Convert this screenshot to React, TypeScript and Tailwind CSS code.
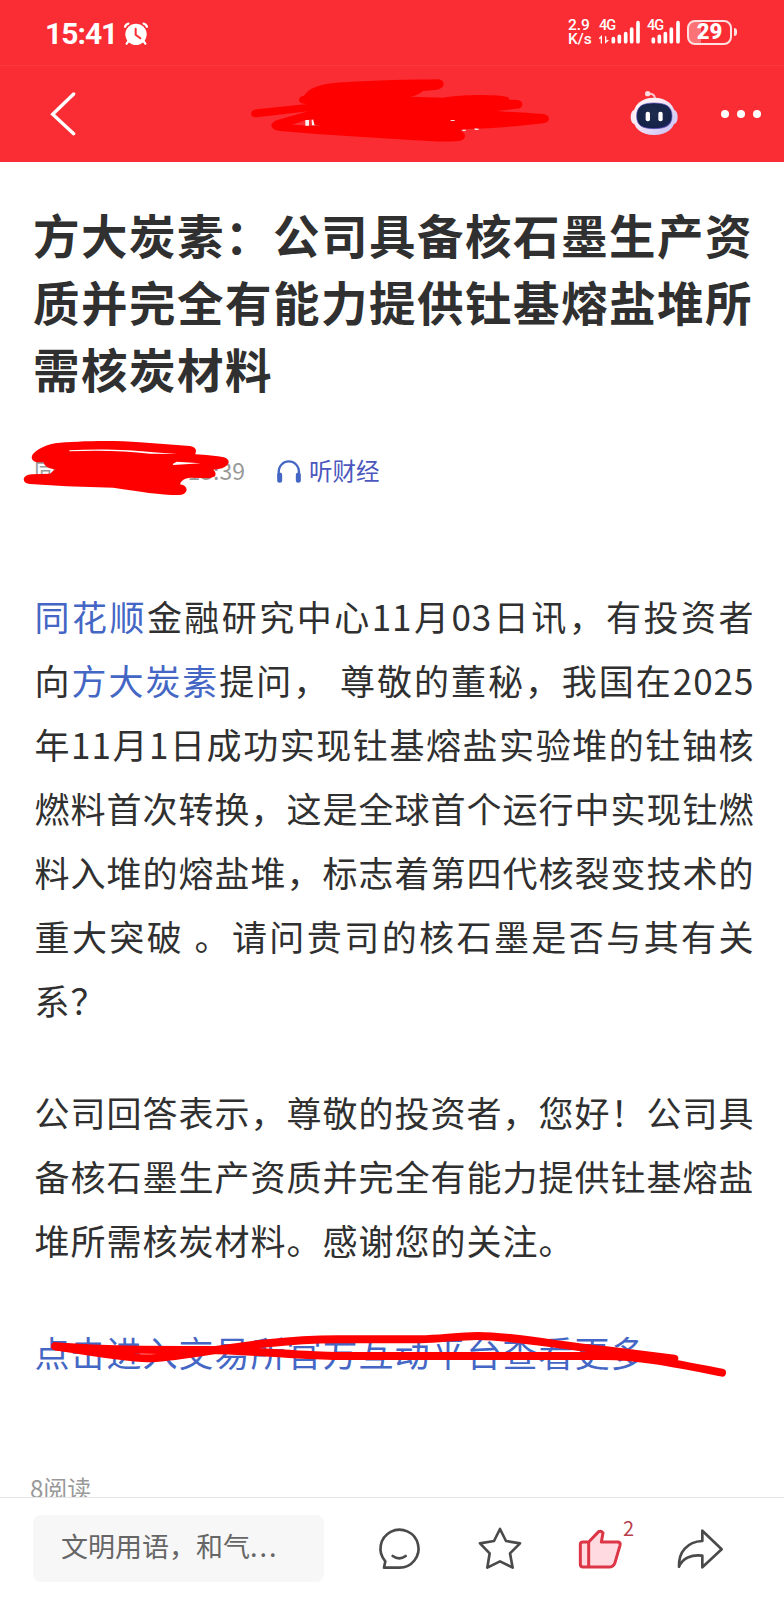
import React from 'react';

const questionLines: React.ReactNode[] = [
  <><span className="text-[#4466c4]">同花顺</span>金融研究中心11月03日讯，有投资者</>,
  <>向<span className="text-[#4466c4]">方大炭素</span>提问， 尊敬的董秘，我国在2025</>,
  '年11月1日成功实现钍基熔盐实验堆的钍铀核',
  '燃料首次转换，这是全球首个运行中实现钍燃',
  '料入堆的熔盐堆，标志着第四代核裂变技术的',
  '重大突破 。请问贵司的核石墨是否与其有关',
  '系？',
];

const answerLines: React.ReactNode[] = [
  '公司回答表示，尊敬的投资者，您好！公司具',
  '备核石墨生产资质并完全有能力提供钍基熔盐',
  '堆所需核炭材料。感谢您的关注。',
];

const Paragraph: React.FC<{ lines: React.ReactNode[] }> = ({ lines }) => (
  <p className="mb-12">
    {lines.map((line, i) => (
      <span
        key={i}
        className={
          i < lines.length - 1
            ? 'block h-16 whitespace-nowrap [text-align-last:justify]'
            : 'block h-16 whitespace-nowrap'
        }
      >
        {line}
      </span>
    ))}
  </p>
);

const AlarmIcon = () => (
  <svg className="w-6 h-6" viewBox="372 64 72 72" fill="none" stroke="white" strokeLinecap="round">
    <circle cx="408" cy="101" r="32" fill="white" stroke="none" />
    <path d="M375 78q3-7 10-9M441 78q-3-7-10-9" strokeWidth="7" />
    <path d="M385 122l-5 7M431 122l5 7" strokeWidth="7" />
    <path d="M407 84v18l14 11" stroke="#f92d33" strokeWidth="6" />
  </svg>
);

const StatusBar = () => (
  <div className="flex h-[65px] items-center pl-[45px] pr-[47px] pt-[2px] font-['Roboto',sans-serif] text-white">
    <span className="w-[79px] whitespace-nowrap text-[30px] leading-none font-bold tracking-[-1px]">15:41</span>
    <AlarmIcon />
    <div className="ml-auto flex h-[28px] items-start">
      <div className="mr-[7px] w-[24px] text-[15.5px] font-medium">
        <div className="-mt-[2px] h-[14px] leading-[14px]">2.9</div>
        <div className="h-[14px] leading-[14px]">K/s</div>
      </div>
      <div className="relative mr-[7px] h-[25px] w-[41px]">
        <span className="absolute -top-[1px] left-0 text-[14.5px] leading-[14px] font-medium tracking-[-1px]">4G</span>
        <svg className="h-[25px] w-[41px]" viewBox="620 62 123 75" stroke="white" strokeLinecap="round">
          <path d="M663 127v-9M681 127v-16M700 127v-24M718 127v-38M737 127v-57" strokeWidth="11" />
          <path d="M622 117l5-5v19M640 112v17l7-6" fill="none" strokeWidth="4" />
        </svg>
      </div>
      <div className="relative mr-[7px] h-[25px] w-[33px]">
        <span className="absolute -top-[1px] left-0 text-[14.5px] leading-[14px] font-medium tracking-[-1px]">4G</span>
        <svg className="h-[25px] w-[33px]" viewBox="764 62 99 75" stroke="white" strokeLinecap="round">
          <path d="M783 127v-8M801 127v-16M819 127v-24M837 127v-38M857 127v-57" strokeWidth="11" />
        </svg>
      </div>
      <div className="flex items-center">
        <div className="flex h-[25px] w-[45px] items-center justify-center rounded-[8px] border-2 border-[#ffe0e0] bg-linear-to-r from-[#fc7377] from-30% to-transparent to-30% text-[22px] leading-none font-black">
          29
        </div>
        <div className="ml-[2px] h-[8px] w-[3px] rounded-r bg-[#ffe0e0]" />
      </div>
    </div>
  </div>
);

const RobotIcon = () => (
  <svg className="h-[46px] w-[48px]" viewBox="715 267 144 138">
    <defs>
      <linearGradient id="shell" x1="0" y1="0" x2="1" y2="1">
        <stop offset="0.3" stopColor="#fff0f5" />
        <stop offset="1" stopColor="#c4bdf5" />
      </linearGradient>
      <radialGradient id="face" cx="0.45" cy="0.4" r="0.75">
        <stop offset="0" stopColor="#202c4d" />
        <stop offset="0.75" stopColor="#14224a" />
        <stop offset="1" stopColor="#4a42b8" />
      </radialGradient>
    </defs>
    <path d="M768 279q20-3 22 12" fill="none" stroke="#ffc5cd" strokeWidth="6" />
    <circle cx="768" cy="278" r="8" fill="#ffdce0" />
    <ellipse cx="728" cy="348" rx="11" ry="21" fill="#f6e8f5" />
    <ellipse cx="847" cy="348" rx="11" ry="21" fill="#d9cff5" />
    <path d="M787 290C825 290 851 312 851 346C851 384 826 402 787 402C749 402 724 384 724 346C724 312 749 290 787 290Z" fill="url(#shell)" />
    <path d="M787 306C822 306 841 316 841 345C841 374 822 383 787 383C752 383 735 374 735 345C735 316 752 306 787 306Z" fill="url(#face)" stroke="#5b4fc0" strokeWidth="2" />
    <rect x="762" y="332" width="13" height="29" rx="6" fill="white" />
    <rect x="800" y="332" width="13" height="29" rx="6" fill="white" />
  </svg>
);

const NavBar = () => (
  <div className="relative flex h-[97px] items-center border-t border-[#fb393e] pl-[50px] pr-[22px]">
    <svg className="h-[44px] w-[26px]" viewBox="150 271 78 132" fill="none" stroke="white" strokeWidth="10">
      <path d="M221 277L158 338L221 396" strokeLinecap="round" />
    </svg>
    <svg className="absolute left-[230px] top-[-1px] h-[90px] w-[340px]" viewBox="0 0 1020 270">
      <path
        fill="#ff0000"
        d="M207 105Q208 93 222 92C240 65 280 55 340 52C440 46 540 44 625 43Q641 45 641 58Q640 70 622 74L580 78Q565 90 542 95L640 98C700 88 800 88 835 97L838 104L862 105Q877 107 877 119Q875 131 860 131L800 138C850 142 900 144 940 147Q957 150 957 162Q955 173 938 175C880 182 800 190 700 192L690 197Q705 202 705 213Q704 226 685 228C640 232 600 228 540 225L270 208L150 198Q124 195 124 181Q125 170 145 164L235 139L80 157Q63 157 63 145Q65 134 80 133L232 117Q207 117 207 105Z"
      />
      <path d="M186 179L228 165L253 163L250 178L272 184Z" fill="#f92d33" />
      <path d="M226 165h11v17h-11zM245 164h4l5 17h-8z" fill="#fff0f0" />
      <path d="M662 165h12v3h-12zM697 194h10v4h-10zM734 190l12 1v4h-12z" fill="#ffdcdc" />
    </svg>
    <div className="ml-auto mr-[43px] -mt-[3px]"><RobotIcon /></div>
    <div className="flex gap-[8px] pr-[1px]">
      <i className="size-[8px] rounded-full bg-white" />
      <i className="size-[8px] rounded-full bg-white" />
      <i className="size-[8px] rounded-full bg-white" />
    </div>
  </div>
);

const MetaRow = () => (
  <div className="relative mt-[53px] flex h-9 items-center text-[23px] leading-9">
    <span className="-mt-[4px] w-[211px] whitespace-nowrap text-right text-[#999]">
      <span className="float-left">同花顺</span>15:39
    </span>
    <svg className="ml-[31px] mr-[7px] h-[24px] w-[26px]" viewBox="829 105 78 72" fill="none" stroke="#4466c4">
      <path d="M837 152v-9C837 98 898 98 898 143v9" strokeWidth="7" />
      <path d="M840 150v16M896 150v16" strokeWidth="15" strokeLinecap="round" />
    </svg>
    <span className="-mt-[4px] text-[23.5px] text-[#4b57bd]">听财经</span>
    <svg className="absolute left-[-34px] top-[-29px] h-[90px] w-[400px]" viewBox="0 0 1200 270">
      <path
        fill="#ff0000"
        d="M95 97C97 80 130 62 165 55C230 48 340 45 420 52L570 63Q588 66 588 78L586 88C620 90 650 93 672 97Q687 102 686 113Q680 128 655 132L640 134Q650 142 645 154L630 160L570 158Q545 160 540 178Q560 182 560 195Q557 210 535 210C480 210 420 200 340 188L200 184L90 177Q71 175 71 162Q73 150 95 148L150 146L165 133Q135 130 130 112L110 112Q95 108 95 97Z"
      />
      <path d="M208 76C300 71 400 75 460 82L532 87L450 86C380 78 300 75 208 79ZM518 117L530 110L602 115L520 120Z" fill="white" />
    </svg>
  </div>
);

const CommentBar = () => (
  <div className="absolute inset-x-0 bottom-0 flex h-[103px] items-start border-t border-[#e6e6e6] bg-white pl-[33px] pt-[17px]">
    <div className="h-[67px] w-[291px] rounded-[8px] bg-[#f7f7f7] pl-[28px] text-[27px] leading-[62px] text-[#666]">
      文明用语，和气<span className="tracking-[2px]">...</span>
    </div>
    <div className="relative mt-[11px] flex" aria-label="actions">
      <svg className="ml-[52px] size-[46px]" viewBox="48 108 138 138" fill="none" stroke="#4a4a4a" strokeWidth="8" strokeLinejoin="round" strokeLinecap="round">
        <path d="M118 233A57 57 0 1 0 76 214L72 233Z" />
        <path d="M98 198q20 14 39 0" />
      </svg>
      <svg className="ml-[55px] size-[46px]" viewBox="351 108 138 138" fill="none" stroke="#4a4a4a" strokeWidth="8" strokeLinejoin="round">
        <path d="M420 117L438 153L480 160L450 190L458 233L420 214L382 233L389 190L360 160L402 153Z" />
      </svg>
      <svg className="ml-[54px] size-[46px]" viewBox="651 108 138 138" fill="#ffdbe1" stroke="#dc3545" strokeWidth="9" strokeLinejoin="round">
        <path d="M686 156L716 125Q723 121 729 129L724 156H775Q782 158 780 166L765 218Q760 231 747 231H669Q661 231 661 223V164Q661 156 669 156Z" />
        <path d="M686 156V231" />
      </svg>
      <span className="absolute left-[299px] top-[-10px] text-[20px] leading-6 text-[#b8404d]">2</span>
      <svg className="ml-[53px] h-[46px] w-[48px]" viewBox="948 108 144 138" fill="none" stroke="#4a4a4a" strokeWidth="8" strokeLinejoin="round">
        <path d="M1027 122L1085 178L1027 232V197C994 192 967 206 957 230C955 186 982 155 1027 153Z" />
      </svg>
    </div>
  </div>
);

export default function App() {
  return (
    <div className="relative h-[1600px] w-[784px] overflow-hidden bg-white font-['Noto_Sans_CJK_SC',sans-serif] text-[#303030]">
      <header className="h-[162px] bg-[#f92d33]">
        <StatusBar />
        <NavBar />
      </header>

      <main className="px-[34px] pt-[38px]">
        <h1 className="-ml-px -mr-4 whitespace-nowrap text-[46.5px] leading-[67px] font-bold tracking-[1.5px]">
          方大炭素：公司具备核石墨生产资
          <br />
          质并完全有能力提供钍基熔盐堆所
          <br />
          需核炭材料
        </h1>

        <MetaRow />

        <article className="mt-[94px] w-[720.5px] pl-[0.5px] text-[35px] leading-[64px] tracking-[1px]">
          <Paragraph lines={questionLines} />
          <Paragraph lines={answerLines} />
          <div className="relative h-16 whitespace-nowrap text-[#4466c4]">
            点击进入交易所官方互动平台查看更多
            <svg
              className="absolute left-[-14px] top-[-10px] h-[90px] w-[750px]"
              viewBox="0 0 2250 270"
              fill="none"
              stroke="#ff0000"
              strokeWidth="24"
              strokeLinecap="round"
              strokeLinejoin="round"
            >
              <path d="M103 109C200 125 320 145 380 145C480 145 700 88 950 88H1200C1260 86 1320 78 1370 78C1480 78 1600 105 1750 120L1960 146" />
              <path d="M103 109C250 122 400 120 560 120C700 122 850 138 950 138H1750C1850 138 1950 158 2103 188" />
              <path d="M115 111L330 128" />
            </svg>
          </div>
        </article>

        <p className="mt-[88px] -ml-1 text-[24px] leading-8 text-[#999]">8阅读</p>
      </main>

      <CommentBar />
    </div>
  );
}
